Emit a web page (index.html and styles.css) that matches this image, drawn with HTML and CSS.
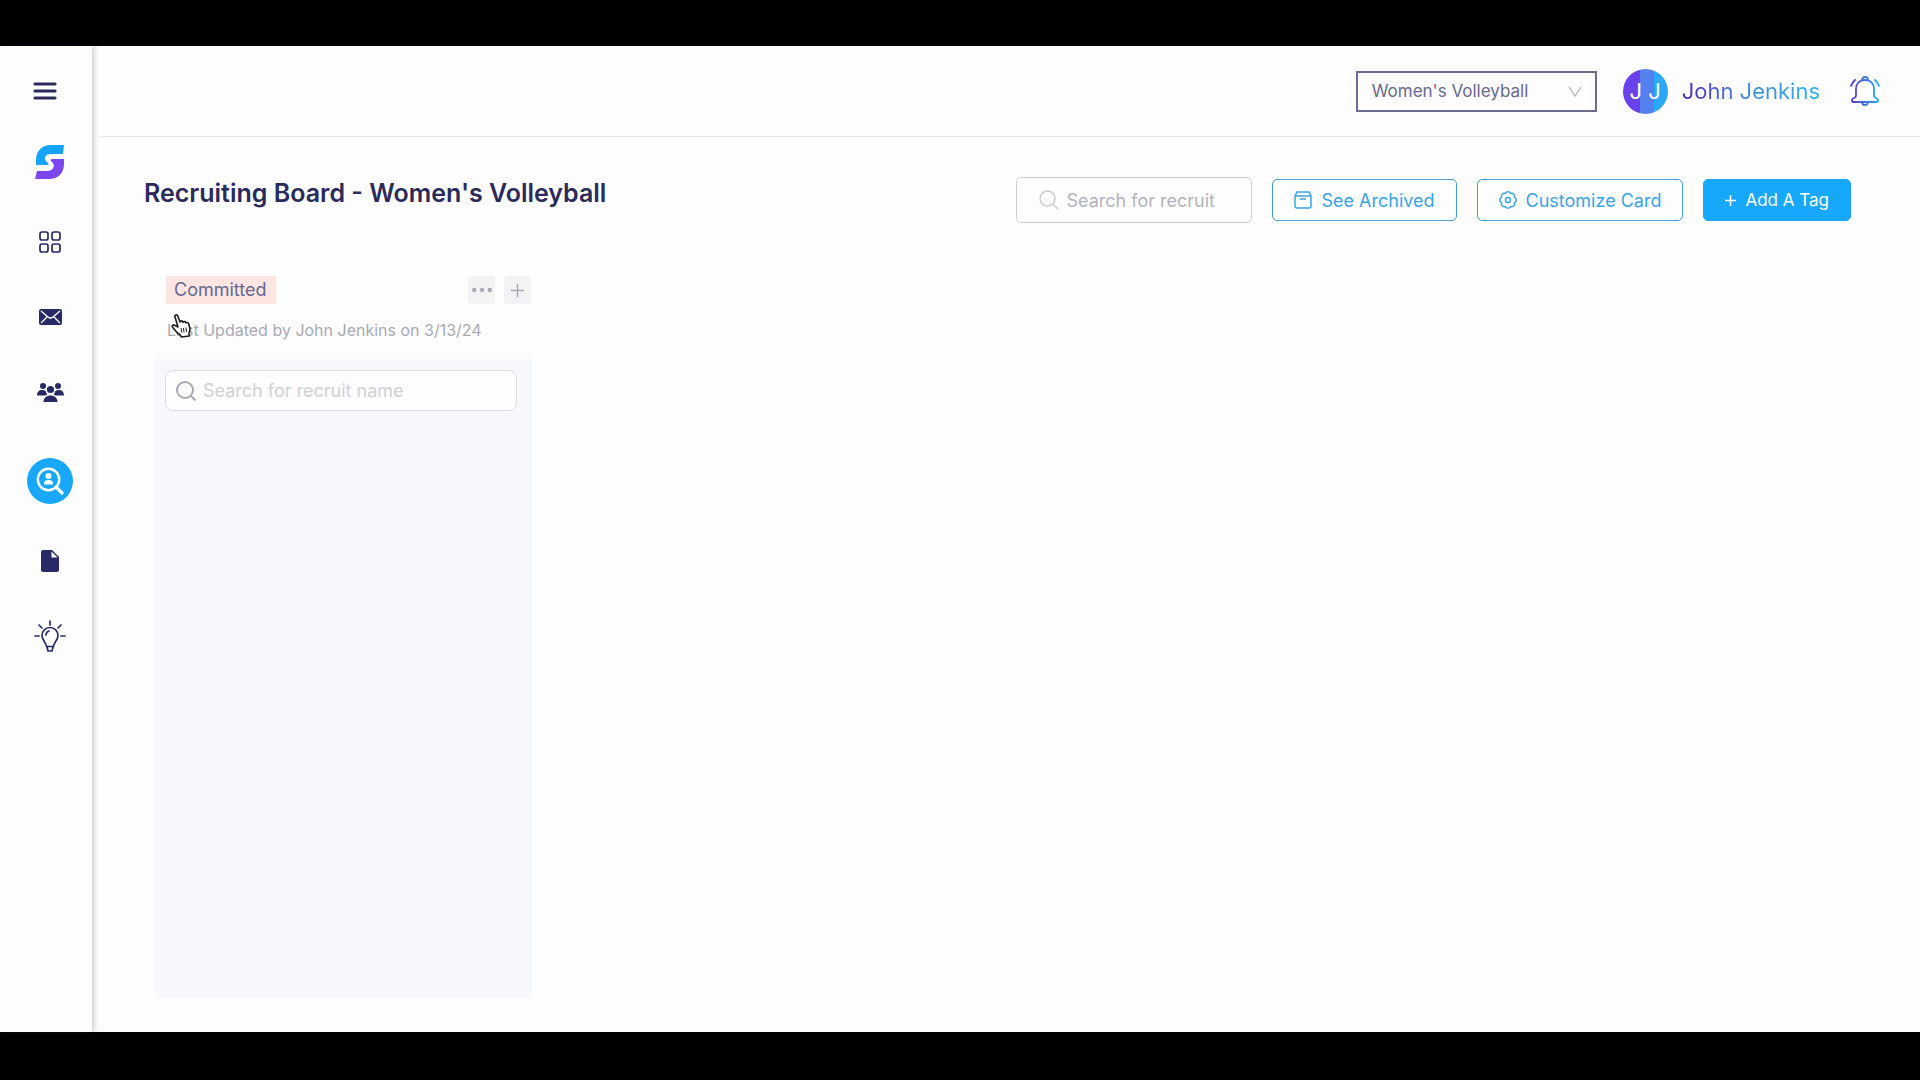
FILE: index.html
```html
<!DOCTYPE html>
<html lang="en">
<head>
    <meta charset="UTF-8">
    <meta name="viewport" content="width=device-width, initial-scale=1.0">
    <title>Recruiting Board</title>
    <link rel="stylesheet" href="styles.css">
</head>
<body>
    <div class="app">
        <aside class="sidebar">
            <button type="button" class="menu-btn" aria-label="Toggle menu">
                <svg width="24" height="20" viewBox="0 0 24 20" stroke="currentColor" stroke-width="3.200" stroke-linecap="round">
                    <path d="M2 3h20M2 10h20M2 17h20"/>
                </svg>
            </button>
            <a href="#" class="logo" aria-label="Home">
                <svg width="30" height="34" viewBox="0 0 30 34">
                    <path fill="#14a5fb" d="M29 0 28 9H16c-6 0-8 5-4 8l1 1c1 1 1 2-1 2H1V15C1 6 7 0 16 0z"/>
                    <path fill="#7b46f0" d="M0 34 2 26H12c6 0 9-5 5-9l-1-1c-1-1 0-2 1-2H29v5C29 28 23 34 14 34z"/>
                </svg>
            </a>
            <nav class="nav">
                <a href="#" class="nav-item" aria-label="Dashboard">
                    <svg width="22" height="22" viewBox="0 0 22 22" fill="none" stroke="currentColor" stroke-width="1.700">
                        <rect x="1" y="1" width="8" height="8" rx="2"/>
                        <rect x="13" y="1" width="8" height="8" rx="2"/>
                        <rect x="1" y="13" width="8" height="8" rx="2"/>
                        <rect x="13" y="13" width="8" height="8" rx="2"/>
                    </svg>
                </a>
                <a href="#" class="nav-item" aria-label="Messages">
                    <svg width="23" height="16" viewBox="0 0 23 16">
                        <rect width="23" height="16" rx="2" fill="currentColor"/>
                        <path d="M2 2l7 6q2.500 2 5 0l7-6M2 14l6-6M21 14l-6-6" fill="none" stroke="#fff" stroke-width="1.400"/>
                    </svg>
                </a>
                <a href="#" class="nav-item" aria-label="Team">
                    <svg width="27" height="19" viewBox="0 0 27 19" fill="currentColor">
                        <circle cx="6" cy="3" r="3"/>
                        <circle cx="21" cy="3" r="3"/>
                        <circle cx="13.500" cy="6.500" r="3.600"/>
                        <path d="M0 12.500C0 9 2 7 5 7c2 0 3 .5 4 1.500.2 1.500.6 2.300 1.500 3-1 .3-1.700.6-2.200 1z"/>
                        <path d="M27 12.500C27 9 25 7 22 7c-2 0-3 .5-4 1.500-.2 1.500-.6 2.300-1.500 3 1 .3 1.700.6 2.200 1z"/>
                        <path d="M6.500 19c0-4 3-6.500 7-6.500s7 2.500 7 6.500z"/>
                    </svg>
                </a>
                <a href="#" class="nav-item active" aria-label="Recruiting" aria-current="page">
                    <svg width="28" height="28" viewBox="0 0 28 28">
                        <circle cx="12.500" cy="12.500" r="10.700" fill="none" stroke="#fff" stroke-width="2.400"/>
                        <path d="M20 20l6 6" stroke="#fff" stroke-width="3.200" stroke-linecap="round"/>
                        <circle cx="12.500" cy="9" r="3" fill="#fff"/>
                        <path d="M8 17.500v-1c0-2.500 1.500-3.500 4.500-3.500s4.500 1 4.500 3.500v1z" fill="#fff"/>
                    </svg>
                </a>
                <a href="#" class="nav-item" aria-label="Documents">
                    <svg width="18" height="22" viewBox="0 0 18 22">
                        <path fill="currentColor" d="M2 0h9l7 7v13a2 2 0 0 1-2 2H2a2 2 0 0 1-2-2V2a2 2 0 0 1 2-2z"/>
                        <path d="M10.500 1.500v6h6z" fill="#fff"/>
                    </svg>
                </a>
                <a href="#" class="nav-item" aria-label="Ideas">
                    <svg width="32" height="32" viewBox="0 0 32 32" fill="none" stroke="currentColor" stroke-width="1.700" stroke-linecap="round" stroke-linejoin="round">
                        <path d="M12.500 26.500c0-4-4.500-6-4.500-11a8 8 0 0 1 16 0c0 5-4.500 7-4.500 11zM13 27l1 4h4l1-4M12 15q0-3 3-4M16 1v4M5 5l3 3M27 5l-3 3M1 16h4M27 16h4"/>
                    </svg>
                </a>
            </nav>
        </aside>

        <div class="content">
            <header class="topbar">
                <div class="select-wrap">
                    <select class="team-select" aria-label="Team">
                        <option>Women's Volleyball</option>
                    </select>
                    <svg class="chevron" width="14" height="12" viewBox="0 0 14 12" fill="none" stroke="currentColor" stroke-width="1.300">
                        <path d="M1 1l6 9 6-9"/>
                    </svg>
                </div>
                <a href="#" class="user">
                    <span class="avatar">J J</span>
                    <span class="user-name">John Jenkins</span>
                </a>
                <button type="button" class="bell" aria-label="Notifications">
                    <svg width="30" height="32" viewBox="0 0 30 32" fill="none" stroke="url(#bellGradient)" stroke-width="1.800" stroke-linecap="round" stroke-linejoin="round">
                        <defs>
                            <linearGradient id="bellGradient" x1="0" y1="0" x2="30" y2="0" gradientUnits="userSpaceOnUse">
                                <stop offset="0" stop-color="#5b2fc4"/>
                                <stop offset="1" stop-color="#25b4f8"/>
                            </linearGradient>
                        </defs>
                        <path d="M12 5a3 3 0 1 1 6 0M15 5c-6 0-9 4-9 9v7c0 2-4 2-4 4 0 1 0 2 1 2h24c1 0 1-1 1-2 0-2-4-2-4-4v-7c0-5-3-9-9-9zM12 27a3 3 0 1 0 6 0M5 5q-3 3-4 6M25 5q3 3 4 6"/>
                    </svg>
                </button>
            </header>

            <main class="board">
                <div class="board-header">
                    <h1>Recruiting Board - Women's Volleyball</h1>
                    <div class="actions">
                        <label class="search">
                            <svg width="20" height="20" viewBox="0 0 20 20" fill="none" stroke="currentColor" stroke-width="1.500">
                                <circle cx="8.500" cy="8.500" r="7.500"/>
                                <path d="M14 14l5 5"/>
                            </svg>
                            <input type="text" placeholder="Search for recruit" aria-label="Search for recruit">
                        </label>
                        <button type="button" class="btn">
                            <svg width="18" height="18" viewBox="0 0 18 18" fill="none" stroke="currentColor" stroke-width="1.500">
                                <path d="M1 5l2-4h12l2 4v10a2 2 0 0 1-2 2H3a2 2 0 0 1-2-2zM1 5h16M6 8h6"/>
                            </svg>
                            See Archived
                        </button>
                        <button type="button" class="btn">
                            <svg width="18" height="18" viewBox="0 0 18 18" fill="none" stroke="currentColor" stroke-width="1.500" stroke-linejoin="round">
                                <path d="M15.500 11.700A3 3 0 0 1 11.700 15.500A3 3 0 0 1 6.300 15.500A3 3 0 0 1 2.500 11.700A3 3 0 0 1 2.500 6.300A3 3 0 0 1 6.300 2.500A3 3 0 0 1 11.700 2.500A3 3 0 0 1 15.500 6.300A3 3 0 0 1 15.500 11.700z"/>
                                <circle cx="9" cy="9" r="2.500"/>
                            </svg>
                            Customize Card
                        </button>
                        <button type="button" class="btn btn-primary">
                            <svg width="11" height="11" viewBox="0 0 11 11" stroke="currentColor" stroke-width="1.500">
                                <path d="M5.500 0v11M0 5.500h11"/>
                            </svg>
                            Add A Tag
                        </button>
                    </div>
                </div>

                <section class="column">
                    <div class="column-header">
                        <h2 class="tag">Committed</h2>
                        <div class="column-tools">
                            <button type="button" class="tool" aria-label="More options">
                                <svg width="20" height="6" viewBox="0 0 20 6" fill="currentColor">
                                    <circle cx="2.200" cy="3" r="2.200"/>
                                    <circle cx="10" cy="3" r="2.200"/>
                                    <circle cx="17.800" cy="3" r="2.200"/>
                                </svg>
                            </button>
                            <button type="button" class="tool" aria-label="Add recruit">
                                <svg width="13" height="13" viewBox="0 0 13 13" stroke="currentColor" stroke-width="1.500">
                                    <path d="M6.500 0v13M0 6.500h13"/>
                                </svg>
                            </button>
                        </div>
                    </div>
                    <p class="updated">
                        Last Updated by John Jenkins on 3/13/24
                        <svg class="cursor" width="20" height="24" viewBox="0 0 20 24" fill="#fff" stroke="#1c1c1c" stroke-width="1.600" stroke-linejoin="round">
                            <path d="M7 13 4 3c-.6-2 2-3 2.800-1L9 8c.5-1.500 2.500-1.500 3 .2.800-1 2.500-.8 3 .6 1-.7 2.500 0 2.800 1.200l1 4c.5 2-.3 4-.8 5l.3 3-8 1-1-2c-2-1-4-3-5.500-5L1.500 13c-1-1.500 1-2.800 2.500-1.500z"/>
                            <path d="M10 14l.8 4.500M12.500 14l.5 4.500M15 13.500l.5 4.500" stroke-width="1"/>
                        </svg>
                    </p>
                    <div class="column-body">
                        <label class="search search-small">
                            <svg width="20" height="20" viewBox="0 0 20 20" fill="none" stroke="currentColor" stroke-width="2">
                                <circle cx="9" cy="9" r="8"/>
                                <path d="M14.500 14.500l5 5"/>
                            </svg>
                            <input type="text" placeholder="Search for recruit name" aria-label="Search for recruit name">
                        </label>
                    </div>
                </section>
            </main>
        </div>
    </div>
</body>
</html>
```
FILE: styles.css
```css
* {
    box-sizing: border-box;
}

body {
    margin: 0;
    min-height: 100vh;
    padding: 46px 0 48px;
    display: flex;
    background-color: #000;
    color: #2a2b5c;
    font-family: Inter, Roboto, sans-serif;
    font-size: 18px;
}

button,
input,
select {
    font: inherit;
}

button {
    cursor: pointer;
}

svg {
    display: block;
    flex-shrink: 0;
}

.app {
    flex: 1;
    display: flex;
    background-color: #fdfdfd;
}

/* Sidebar */
.sidebar {
    width: 92px;
    flex-shrink: 0;
    padding: 35px 0 0 8px;
    display: flex;
    flex-direction: column;
    align-items: center;
    background-color: #fdfdfd;
    box-shadow: 1px 0 6px rgba(40, 40, 80, 0.3);
}

.menu-btn {
    padding: 0;
    margin-right: 11px;
    border: none;
    background: none;
    color: #2a2b5c;
}

.logo {
    margin: 44px 0 40px;
}

.nav {
    display: flex;
    flex-direction: column;
    gap: 29px;
}

.nav-item {
    width: 46px;
    height: 46px;
    display: flex;
    align-items: center;
    justify-content: center;
    border-radius: 50%;
    color: #272a66;
}

.nav-item.active {
    margin: 14px 0 5px;
    background-color: #18a8fb;
}

/* Top bar */
.content {
    flex: 1;
    min-width: 0;
    display: flex;
    flex-direction: column;
}

.topbar {
    height: 91px;
    margin-left: 8px;
    padding-right: 40px;
    display: flex;
    align-items: center;
    justify-content: flex-end;
    border-bottom: 1px solid #e6e6ec;
}

.select-wrap {
    position: relative;
    margin-right: 26px;
}

.team-select {
    width: 241px;
    height: 41px;
    padding: 0 40px 0 14px;
    appearance: none;
    border: 2px solid #6b6b8f;
    border-radius: 0;
    background-color: #fdfdfd;
    color: #67698c;
    font-size: 17px;
}

.chevron {
    position: absolute;
    right: 15px;
    top: 15px;
    color: #b4b4c2;
    pointer-events: none;
}

.user {
    display: flex;
    align-items: center;
    gap: 14px;
    margin-right: 30px;
    text-decoration: none;
    font-size: 22px;
}

.avatar {
    width: 45px;
    height: 45px;
    display: flex;
    align-items: center;
    justify-content: center;
    border-radius: 50%;
    background: linear-gradient(90deg, #6a42ea 38%, #5580f0 38%, #5580f0 68%, #2ba8f8 68%);
    color: #fff;
}

.user-name {
    background: linear-gradient(90deg, #4c2aa0, #4a5ae0 25%, #3f8fd0 50%, #2fb0f5);
    background-clip: text;
    -webkit-background-clip: text;
    color: transparent;
}

.bell {
    padding: 0;
    border: none;
    background: none;
}

/* Board */
.board {
    flex: 1;
    padding: 40px 69px 34px 52px;
    display: flex;
    flex-direction: column;
}

.board-header {
    display: flex;
    justify-content: space-between;
    align-items: flex-start;
    margin-bottom: 53px;
}

h1 {
    margin: 0;
    font-size: 25px;
    font-weight: 600;
    line-height: 32px;
}

.actions {
    display: flex;
    align-items: center;
    gap: 20px;
}

.search {
    width: 236px;
    height: 46px;
    padding: 0 20px 0 22px;
    display: flex;
    align-items: center;
    gap: 7px;
    border: 1px solid #cfcfd8;
    border-radius: 5px;
    background-color: #fdfdfd;
    color: #cacad2;
}

.search input {
    flex: 1;
    min-width: 0;
    padding: 0;
    border: none;
    outline: none;
    background: none;
    color: #2a2b5c;
}

.search input::placeholder {
    color: #b3b3be;
    opacity: 1;
}

.btn {
    height: 42px;
    padding: 0 21px;
    display: flex;
    align-items: center;
    gap: 9px;
    border: 1px solid #3f9fdc;
    border-radius: 5px;
    background-color: #fdfdfd;
    color: #3aa4e6;
    white-space: nowrap;
}

.btn-primary {
    border-color: #18a8fb;
    background-color: #18a8fb;
    color: #fff;
    font-size: 17px;
}

/* Recruit column */
.column {
    flex: 1;
    width: 377px;
    margin-left: 11px;
    display: flex;
    flex-direction: column;
}

.column-header {
    padding: 0 1px 0 11px;
    display: flex;
    align-items: center;
    justify-content: space-between;
}

.tag {
    margin: 0;
    padding: 0 9px 0 8px;
    background-color: #fde6e2;
    color: #66698f;
    font-size: 18px;
    font-weight: 400;
    line-height: 28px;
}

.column-tools {
    display: flex;
    gap: 9px;
}

.tool {
    width: 27px;
    height: 28px;
    padding: 0;
    display: flex;
    align-items: center;
    justify-content: center;
    border: none;
    border-radius: 4px;
    background-color: #f3f3f5;
    color: #a9a9b8;
}

.updated {
    position: relative;
    margin: 16px 0 19px;
    padding-left: 12px;
    color: #a9a9b4;
    font-size: 16px;
    line-height: 20px;
}

.cursor {
    position: absolute;
    left: 16px;
    top: -6px;
}

.column-body {
    flex: 1;
    padding: 11px 15px 11px 10px;
    background-color: #f6f8fb;
}

.search-small {
    width: 100%;
    height: 41px;
    padding: 0 10px;
    border-color: #dcdee6;
    border-radius: 8px;
    color: #a9a9b6;
}

.search-small input::placeholder {
    color: #d0d0d8;
}
```
